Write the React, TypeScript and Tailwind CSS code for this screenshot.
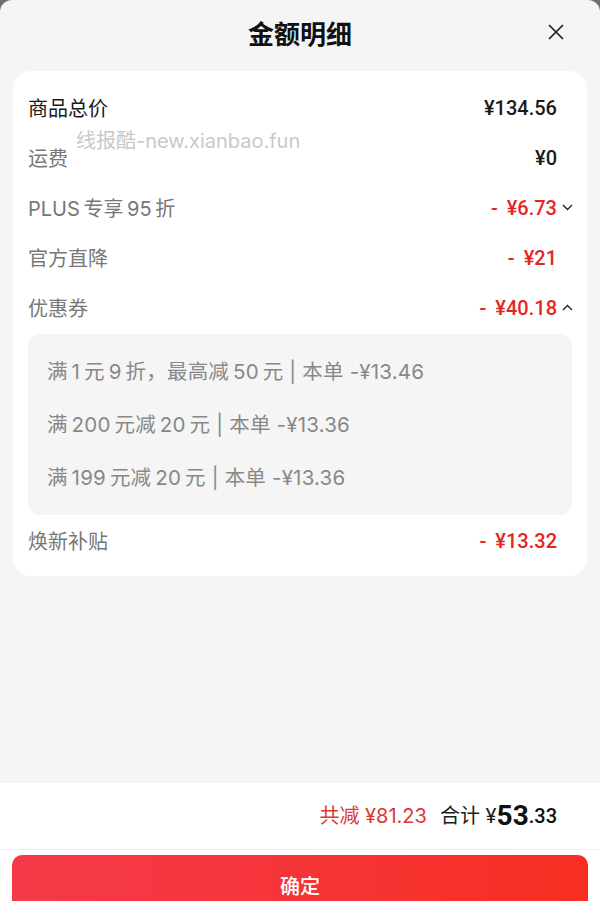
import { X } from "lucide-react";

const cn = { fontFamily: '"Noto Sans CJK SC", "Noto Sans", sans-serif' };
const lat = { fontFamily: 'Inter, "Noto Sans CJK SC", sans-serif' };
const num = { fontFamily: 'Roboto, "Noto Sans CJK SC", sans-serif' };

// thin gap between Chinese and Latin characters, as the app renders it
const g = "\u2009";

function Chevron({ up }: { up?: boolean }) {
    return (
        <svg width="11" height="7" viewBox="0 0 11 7" className="ml-[5px] -mr-[16px]">
            <path
                d={up ? "M1 6 L5.5 1.5 L10 6" : "M1 1 L5.5 5.5 L10 1"}
                fill="none"
                stroke="#222"
                strokeWidth="1.4"
            />
        </svg>
    );
}

function Row({ label, value, dark, red, chevron }: { label: string; value: string; dark?: boolean; red?: boolean; chevron?: "up" | "down" }) {
    return (
        <div className="flex h-[50px] items-center justify-between">
            <span className={`pt-[3px] text-[20px] ${dark ? "text-[#1a1a1a]" : "text-[#777]"}`} style={lat}>
                {label}
            </span>
            <div className="flex items-center pt-[1px]">
                <span className={`text-[20px] font-medium ${red ? "text-[#e5261f]" : "text-[#1a1a1a]"}`} style={num}>
                    {red ? <span className="mr-[9px]">-</span> : null}
                    {value}
                </span>
                {chevron && <Chevron up={chevron === "up"} />}
            </div>
        </div>
    );
}

export default function App() {
    const coupons = [
        `满${g}1${g}元${g}9${g}折，最高减${g}50${g}元 | 本单 -¥13.46`,
        `满${g}200${g}元减${g}20${g}元 | 本单 -¥13.36`,
        `满${g}199${g}元减${g}20${g}元 | 本单 -¥13.36`,
    ];

    return (
        <div className="h-[901px] w-full overflow-hidden bg-[#707070]">
            <div className="flex h-full flex-col overflow-hidden rounded-t-[12px] bg-[#f5f5f5]">
                {/* header */}
                <div className="relative flex h-[64px] shrink-0 items-center justify-center">
                    <h1 className="text-[26px] font-bold text-[#111]" style={cn}>
                        金额明细
                    </h1>
                    <X className="absolute right-[31px] top-[19px]" size={26} strokeWidth={1.6} color="#222" />
                </div>

                {/* detail card */}
                <div className="mx-[13px] mt-[7px] shrink-0 rounded-[18px] bg-white pb-[11px] pl-[15px] pr-[30px] pt-[11px]">
                    <div className="relative">
                        <Row label="商品总价" value="¥134.56" dark />
                        <span className="pointer-events-none absolute left-[48px] top-[44px] text-[20px] text-[#c9c9c9]" style={lat}>
                            线报酷-new.xianbao.fun
                        </span>
                        <Row label="运费" value="¥0" />
                        <Row label={`PLUS${g}专享${g}95${g}折`} value="¥6.73" red chevron="down" />
                        <Row label="官方直降" value="¥21" red />
                        <Row label="优惠券" value="¥40.18" red chevron="up" />
                    </div>

                    {/* coupon list */}
                    <div className="-mr-[15px] mt-[2px] rounded-[12px] bg-[#f5f5f5] px-[19px] py-[11px]">
                        {coupons.map((c) => (
                            <div key={c} className="flex h-[53px] items-center pt-[2px] text-[20.5px] tracking-[0.2px] text-[#888]" style={lat}>
                                {c}
                            </div>
                        ))}
                    </div>

                    <Row label="焕新补贴" value="¥13.32" red />
                </div>

                <div className="h-[207px] shrink-0" />

                {/* total bar */}
                <div className="flex h-[67px] shrink-0 items-center justify-end border-b border-[#f0f0f0] bg-white pr-[43px]">
                    <span className="text-[20px] text-[#d83a30]" style={lat}>
                        共减 ¥81.23
                    </span>
                    <span className="ml-[13px] text-[20px] text-[#1a1a1a]" style={lat}>
                        合计 ¥
                    </span>
                    <span className="text-[28px] font-bold leading-none text-[#111]" style={num}>
                        53
                    </span>
                    <span className="text-[20px] font-medium text-[#111]" style={num}>
                        .33
                    </span>
                </div>

                {/* confirm */}
                <div className="shrink-0 bg-white px-[12px] pt-[5px]">
                    <button
                        className="flex h-[62px] w-full items-center justify-center rounded-[10px] bg-gradient-to-r from-[#f43a49] to-[#f72e20] text-[20px] font-medium text-white"
                        style={cn}
                    >
                        确定
                    </button>
                </div>
            </div>
        </div>
    );
}
